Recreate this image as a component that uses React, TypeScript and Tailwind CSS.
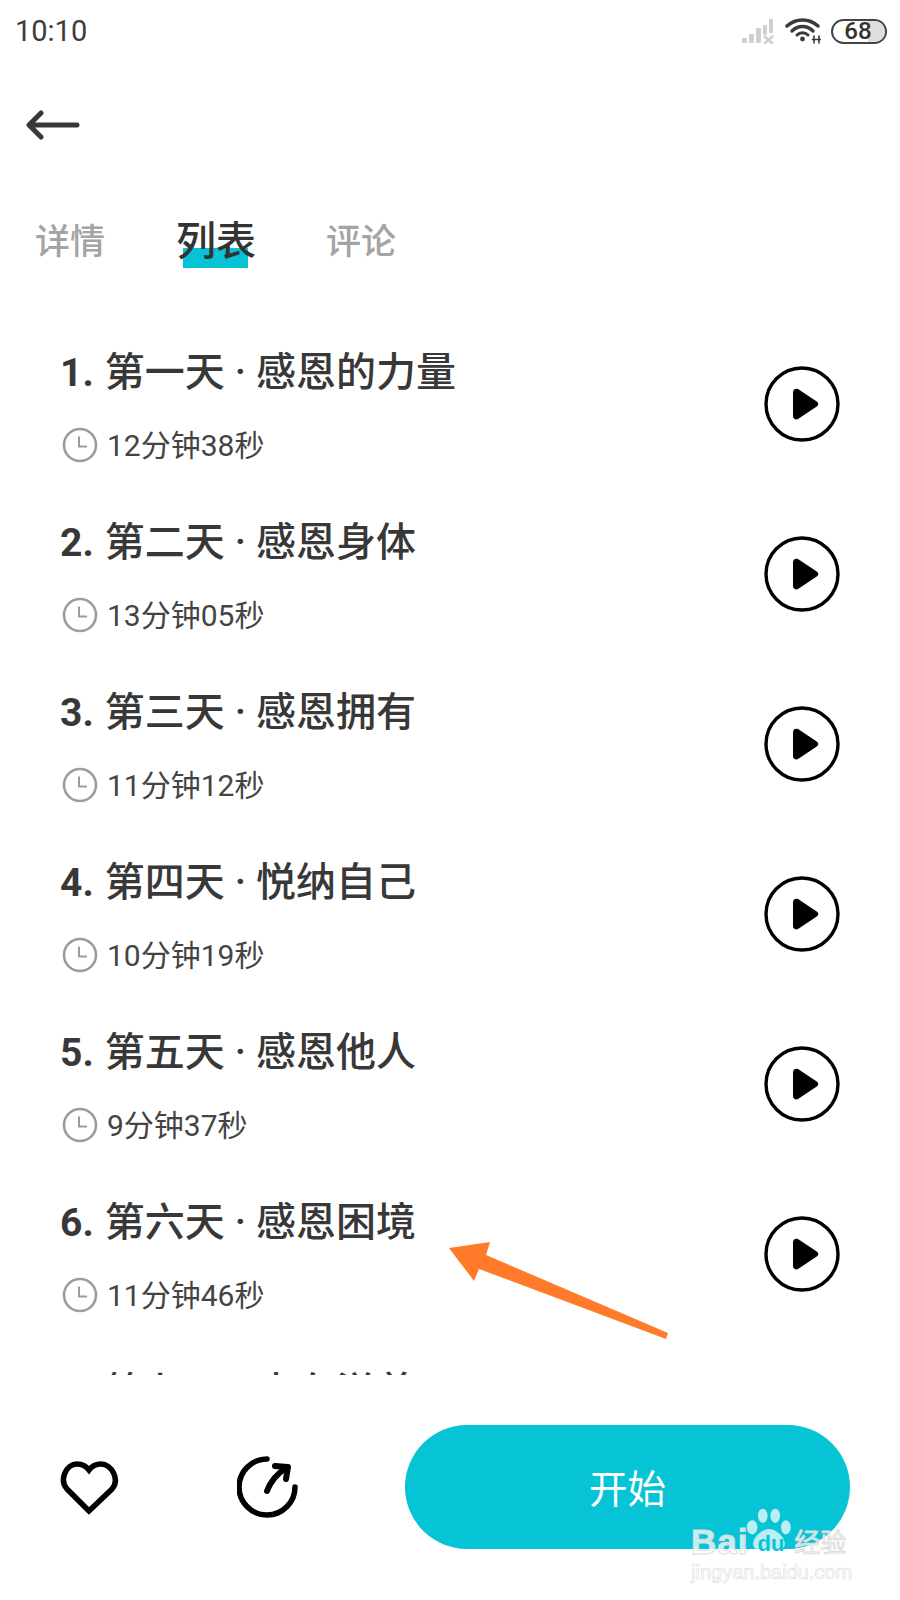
const rows = [
  ['1.', '第一天 · 感恩的力量', '12分钟38秒'],
  ['2.', '第二天 · 感恩身体', '13分钟05秒'],
  ['3.', '第三天 · 感恩拥有', '11分钟12秒'],
  ['4.', '第四天 · 悦纳自己', '10分钟19秒'],
  ['5.', '第五天 · 感恩他人', '9分钟37秒'],
  ['6.', '第六天 · 感恩困境', '11分钟46秒'],
  ['7.', '第七天 · 内在滋养', '10分钟20秒'],
];

function Row({ n, t, d }: { n: string; t: string; d: string }) {
  return (
    <div className="flex h-[170px] shrink-0 items-center pl-[60px] pr-[60px]">
      <div className="mt-[5px] flex-1">
        <div className="flex h-[50px] items-center font-medium leading-[50px] text-[#383838]">
          <span className="mr-[11px] text-[39px] font-bold">{n}</span>
          <span className="text-[40px]">{t}</span>
        </div>
        <div className="mt-[29px] flex h-[36px] items-center text-[30px] text-[#444]">
          <svg width="36" height="36" viewBox="0 0 36 36" fill="none" stroke="#9c9c9c" strokeWidth="2.6" className="ml-[2px] mr-[9px]">
            <circle cx="18" cy="18" r="16" />
            <path d="M17 9.5V19.5H25" strokeWidth="2" />
          </svg>
          {d}
        </div>
      </div>
      <svg width="76" height="76" viewBox="0 0 76 76" fill="none" className="mt-[2px]">
        <circle cx="38" cy="38" r="36" stroke="#000" strokeWidth="3.4" />
        <path d="M29 26C29 23 32 22 34 23L52 35C55 37 55 39 52 41L34 53C32 54 29 53 29 50Z" fill="#000" />
      </svg>
    </div>
  );
}

export default function App() {
  return (
    <div
      className="relative flex h-[1600px] w-[900px] flex-col overflow-hidden bg-white text-[#333]"
      style={{ fontFamily: 'Roboto, "Noto Sans CJK SC", sans-serif' }}
    >
      <div className="flex h-[62px] shrink-0 items-center justify-between pl-[15px] pr-[13px]">
        <span className="text-[29px] leading-none text-[#3c3c3c]">10:10</span>
        <div className="flex items-center">
          <svg width="33" height="26" viewBox="0 0 33 26" fill="#cfcfcf" className="mr-[11px]">
            <rect x="1" y="20" width="5" height="5" rx="1" />
            <rect x="8" y="16" width="5" height="9" rx="1" />
            <rect x="15" y="10" width="5" height="15" rx="1" />
            <rect x="22" y="7" width="4" height="10" rx="1" />
            <rect x="28" y="1" width="4" height="14" rx="1" />
            <path d="M23 18L32 26M32 18L23 26" stroke="#cfcfcf" strokeWidth="2.6" />
          </svg>
          <svg width="36" height="26" viewBox="0 0 36 26" fill="none" stroke="#3a3a3a" strokeLinecap="round" className="mr-[10px]">
            <path d="M2 8C11 0 24 0 33 8" strokeWidth="3.4" />
            <path d="M7 13C13 7 22 7 28 13" strokeWidth="3.4" />
            <path d="M12 17C15 14 20 14 23 17" strokeWidth="3" />
            <circle cx="17.5" cy="21" r="2.4" fill="#3a3a3a" stroke="none" />
            <path d="M29 18V25M34 18V25M27.5 21.5H35.5" strokeWidth="1.6" />
          </svg>
          <div className="relative flex h-[25px] w-[56px] items-center justify-center overflow-hidden rounded-full border-[2.5px] border-[#444] text-[24px] font-medium leading-none text-[#333]">
            <div className="absolute inset-y-0 right-0 w-[17px] bg-[#dedede]" />
            <span className="relative -ml-[2px]">68</span>
          </div>
        </div>
      </div>

      <div className="flex h-[126px] shrink-0 items-center pl-[26px]">
        <svg width="54" height="30" viewBox="0 0 54 30" fill="none" stroke="#383838" strokeWidth="5" strokeLinecap="round" strokeLinejoin="round" className="-mt-[1px]">
          <path d="M51 15H4M15 3L3 15L15 27" />
        </svg>
      </div>

      <div className="flex h-[121px] shrink-0 items-start pl-[35px] pt-[29px]">
        <span className="mr-[71px] text-[35px] font-medium leading-[52px] text-[#a4a4a4]">详情</span>
        <span className="relative mr-[70px] h-[51px] w-[80px]">
          <span className="absolute bottom-0 left-[7px] h-[20px] w-[65px] bg-[#06c3d6]" />
          <span className="relative -top-[1px] text-[40px] font-medium leading-[52px] whitespace-nowrap text-[#333]">列表</span>
        </span>
        <span className="text-[35px] font-medium leading-[52px] text-[#a4a4a4]">评论</span>
      </div>

      <div className="mt-[-2px] h-[1068px] shrink-0 overflow-hidden">
        <div className="flex flex-col pt-[11px]">
          {rows.map((r) => (
            <Row key={r[0]} n={r[0]} t={r[1]} d={r[2]} />
          ))}
        </div>
      </div>

      <div className="flex flex-1 items-start pl-[60px] pt-[50px]">
        <svg width="60" height="54" viewBox="0 0 60 54" fill="none" stroke="#000" strokeWidth="5.5" strokeLinejoin="miter" className="mt-[36px]">
          <path d="M29 50L7 28C-1 19 6 3 17 3C22 3 26 5 29 9C32 5 36 3 41 3C52 3 60 19 52 28Z" />
        </svg>
        <svg width="62" height="64" viewBox="0 0 62 64" fill="none" stroke="#000" strokeWidth="5.5" strokeLinecap="round" strokeLinejoin="round" className="ml-[117px] mt-[30px]">
          <path d="M30 4A28 28 0 1 0 58 32" />
          <path d="M30 36C33 28 38 20 49 13" strokeWidth="6" />
          <path d="M38 11L51 12L49 24" strokeWidth="6" />
        </svg>
        <div className="ml-[106px] flex h-[124px] w-[445px] items-center justify-center rounded-[62px] bg-[#06c3d6] pt-[6px] text-[38.5px] text-white">
          开始
        </div>
      </div>

      <svg width="240" height="110" viewBox="0 0 240 110" className="absolute left-[440px] top-[1236px]">
        <path d="M9 12L50 6L46 19L228 97L226 103L39 33L34 45Z" fill="#ff7a2a" />
      </svg>

      <div className="absolute left-[691px] top-[1503px] w-[170px] text-white/75 [-webkit-text-stroke:1px_#dcdcdc]">
        <svg width="48" height="52" viewBox="0 0 54 50" fill="#ffffff" fillOpacity="0.72" className="absolute left-[54px] top-[1px]">
          <ellipse cx="8" cy="22" rx="6" ry="8" />
          <ellipse cx="20" cy="9" rx="5.5" ry="8" />
          <ellipse cx="34" cy="9" rx="5.5" ry="8" />
          <ellipse cx="46" cy="22" rx="5.5" ry="8" />
          <path d="M27 24C36 24 48 36 44 44C40 50 30 48 27 48C24 48 14 50 10 44C6 36 18 24 27 24Z" />
        </svg>
        <div className="relative mt-[17px] flex h-[42px] items-center whitespace-nowrap text-[35px] font-bold leading-none tracking-[1px]" style={{ fontFamily: '"Liberation Sans", sans-serif' }}>
          Bai
          <span className="ml-[9px] mt-[6px] text-[22px] tracking-[0px] text-[#06c3d6] [-webkit-text-stroke:0px_transparent]">du</span>
          <span className="ml-[10px] text-[26px] font-normal tracking-[0px]" style={{ fontFamily: '"Noto Sans CJK SC", sans-serif' }}>经验</span>
        </div>
        <div className="text-[20px] leading-none [-webkit-text-stroke:0.6px_#dcdcdc]" style={{ fontFamily: '"Liberation Sans", sans-serif' }}>jingyan.baidu.com</div>
      </div>
    </div>
  );
}
